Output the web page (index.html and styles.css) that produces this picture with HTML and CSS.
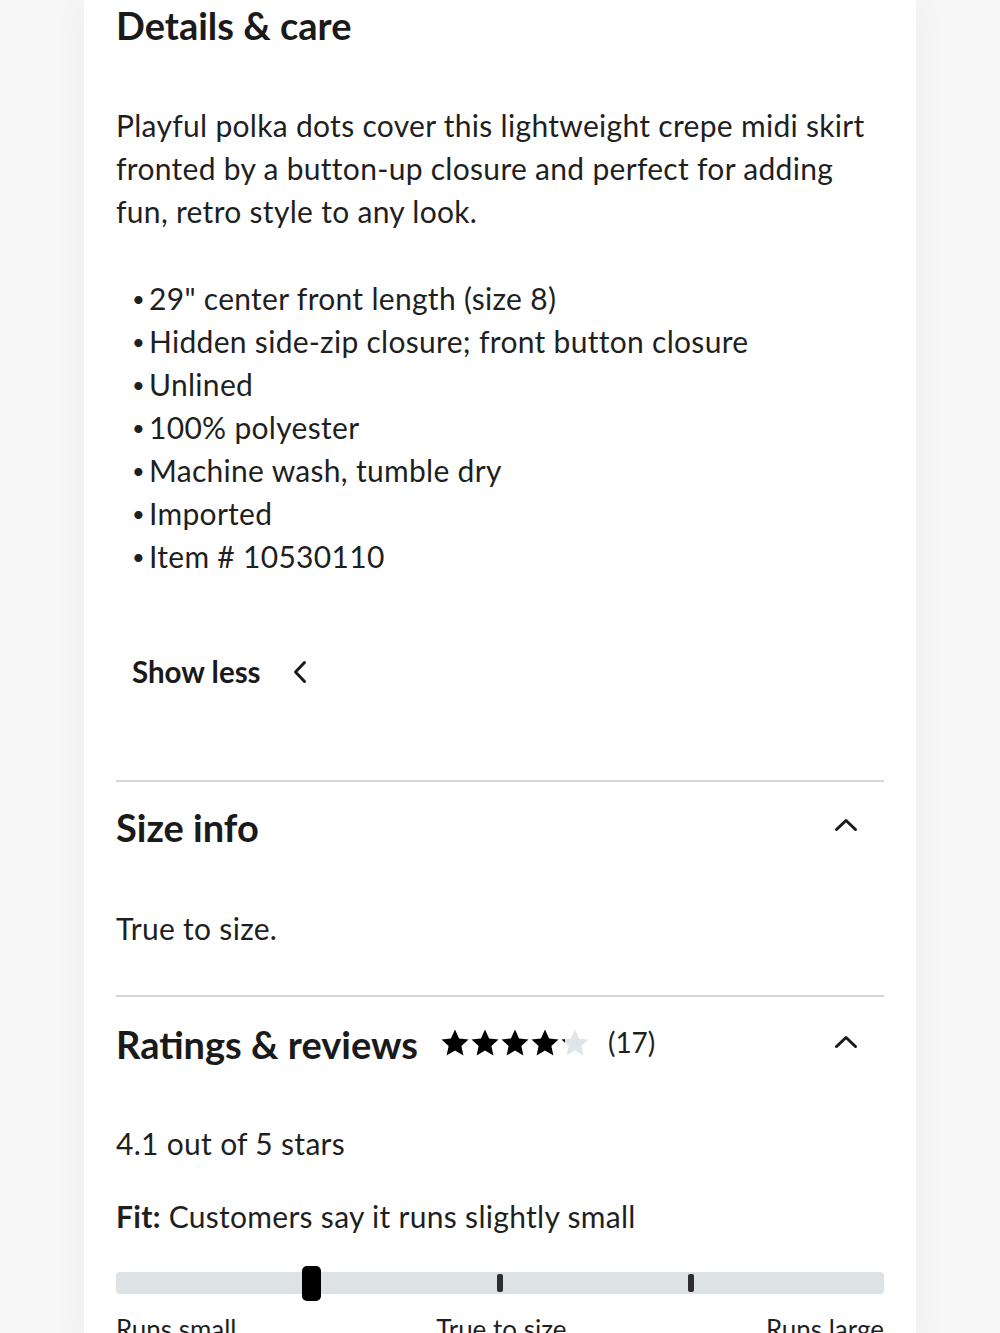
FILE: index.html
```html
<!DOCTYPE html>
<html lang="en">
<head>
    <meta charset="UTF-8">
    <meta name="viewport" content="width=device-width, initial-scale=1.0">
    <title>Details &amp; care</title>
    <link rel="stylesheet" href="styles.css">
</head>
<body>

<div class="card">
    <section class="details">
        <h2 class="title">Details &amp; care</h2>
        <p class="text">Playful polka dots cover this lightweight crepe midi skirt fronted by a button-up closure and perfect for adding fun, retro style to any look.</p>
        <ul class="bullets">
            <li>29" center front length (size 8)</li>
            <li>Hidden side-zip closure; front button closure</li>
            <li>Unlined</li>
            <li>100% polyester</li>
            <li>Machine wash, tumble dry</li>
            <li>Imported</li>
            <li>Item # 10530110</li>
        </ul>
        <button class="show-less">
            Show less
            <svg class="chev-left" viewBox="0 0 14 24"><polyline points="11.5,2.5 2.5,12 11.5,21.5"/></svg>
        </button>
    </section>

    <section class="panel size-info">
        <div class="panel-head">
            <h2 class="title">Size info</h2>
            <svg class="chev-up" viewBox="0 0 24 14"><polyline points="2.5,11.5 12,2.5 21.5,11.5"/></svg>
        </div>
        <p class="text">True to size.</p>
    </section>

    <section class="panel ratings">
        <div class="panel-head">
            <div class="head-left">
                <h2 class="title">Ratings &amp; reviews</h2>
                <svg class="stars" viewBox="0 0 150 30">
                    <defs>
                        <linearGradient id="part">
                            <stop offset="0.12" stop-color="#000"/>
                            <stop offset="0.12" stop-color="#e1e5e8"/>
                        </linearGradient>
                        <path id="star" d="M15 1.5l4.1 9 9.4 1-7.1 6.4 2 9.6L15 22.6l-8.4 4.9 2-9.6-7.1-6.4 9.4-1z"/>
                    </defs>
                    <use href="#star" x="0" fill="#000"/>
                    <use href="#star" x="30" fill="#000"/>
                    <use href="#star" x="60" fill="#000"/>
                    <use href="#star" x="90" fill="#000"/>
                    <use href="#star" x="120" fill="url(#part)"/>
                </svg>
                <span class="count">(17)</span>
            </div>
            <svg class="chev-up" viewBox="0 0 24 14"><polyline points="2.5,11.5 12,2.5 21.5,11.5"/></svg>
        </div>
        <p class="text score">4.1 out of 5 stars</p>
        <p class="text fit"><b>Fit:</b> Customers say it runs slightly small</p>
        <div class="fit-bar">
            <span class="tick tick-mid"></span>
            <span class="tick tick-large"></span>
            <span class="marker"></span>
        </div>
        <div class="fit-labels">
            <span>Runs small</span>
            <span>True to size</span>
            <span>Runs large</span>
        </div>
    </section>
</div>

</body>
</html>
```

FILE: styles.css
```css
body {
    margin: 0;
    background-color: #f6f6f6;
    font-family: Lato, "Open Sans", Arial, sans-serif;
    color: #1f1f1f;
    overflow: hidden;
}

.card {
    width: 768px;
    margin: 0 auto;
    padding: 1px 32px 0;
    background-color: #fff;
    box-shadow: 0 0 40px rgba(0, 0, 0, 0.03);
    min-height: 1340px;
}

.title {
    margin: 0;
    font-size: 38px;
    line-height: 48px;
    font-weight: 700;
    color: #1a1a1a;
}

.text {
    margin: 0;
    font-size: 30px;
    line-height: 43px;
    letter-spacing: 0.3px;
}

.details .text {
    margin-top: 55px;
}

.bullets {
    list-style: none;
    margin: 44px 0 0;
    padding: 0 0 0 16px;
    font-size: 30px;
    line-height: 43px;
    letter-spacing: 0.3px;
}

.bullets li::before {
    content: "\2022";
    display: inline-block;
    width: 17px;
    font-size: 22px;
    vertical-align: top;
}

.show-less {
    display: flex;
    align-items: center;
    gap: 32px;
    margin-top: 72px;
    padding: 0 0 0 16px;
    border: none;
    background: none;
    font-family: inherit;
    font-size: 29.5px;
    line-height: 43px;
    font-weight: 700;
    color: #1a1a1a;
    cursor: pointer;
}

.chev-left {
    width: 14px;
    height: 24px;
}

.chev-left polyline,
.chev-up polyline {
    fill: none;
    stroke: #1a1a1a;
    stroke-width: 3;
    stroke-linecap: round;
    stroke-linejoin: round;
}

.details {
    padding-bottom: 87px;
}

.panel {
    border-top: 2px solid #d4d7da;
}

.panel-head {
    display: flex;
    align-items: center;
    justify-content: space-between;
    padding-right: 26px;
}

.chev-up {
    width: 24px;
    height: 14px;
    margin-top: -4px;
}

.size-info {
    padding: 21px 0 45px;
}

.size-info .text {
    margin-top: 56px;
}

.ratings {
    padding-top: 23px;
}

.head-left {
    display: flex;
    align-items: center;
}

.stars {
    width: 150px;
    height: 30px;
    margin: -2px 0 0 22px;
}

.count {
    margin-left: 18px;
    font-size: 28px;
    margin-top: -4px;
}

.score {
    margin-top: 54px;
}

.fit {
    margin-top: 30px;
}

.fit b {
    font-weight: 700;
}

.fit-bar {
    position: relative;
    height: 22px;
    margin-top: 34px;
    border-radius: 4px;
    background-color: #dde2e5;
}

.tick {
    position: absolute;
    top: 2px;
    width: 6px;
    height: 18px;
    border-radius: 2px;
    background-color: #2e2f32;
}

.tick-mid {
    left: 381px;
}

.tick-large {
    left: 572px;
}

.marker {
    position: absolute;
    top: -6px;
    left: 186px;
    width: 19px;
    height: 35px;
    border-radius: 5px;
    background-color: #000;
}

.fit-labels {
    display: flex;
    justify-content: space-between;
    margin-top: 14px;
    font-size: 26px;
    line-height: 43px;
}
```
